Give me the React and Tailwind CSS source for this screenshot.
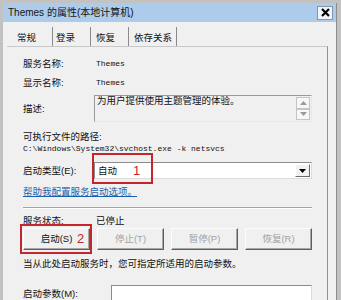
import React from 'react';

const Label = ({ w = 'w-[73px]', children }) => (
  <div className={`${w} shrink-0 text-[9.5px] leading-[12px] text-[#111]`}>{children}</div>
);

const Btn = ({ children, disabled }) => (
  <div
    className={`w-[67px] h-[22px] flex items-center justify-center bg-[#f0f0f0] border border-t-[#fcfcfc] border-l-[#fcfcfc] border-r-[#5f5f5f] border-b-[#5f5f5f] shadow-[inset_-1px_-1px_0_#a8a8a8] text-[9.5px] ${disabled ? 'text-[#a3a3a3]' : 'text-[#111]'}`}
  >
    {children}
  </div>
);

const Arrow = ({ up, color = '#222' }) => (
  <svg width="7" height="4" viewBox="0 0 7 4">
    <path d={up ? 'M0 4 L3.5 0 L7 4 Z' : 'M0 0 L7 0 L3.5 4 Z'} fill={color} />
  </svg>
);

export default function App() {
  return (
    <div className="w-[341px] h-[300px] overflow-hidden bg-[#c2c2c2] pt-[3px] pl-[3px] pr-[4px] font-['Liberation_Sans','Noto_Sans_CJK_SC',sans-serif]">
      <div className="h-[310px] bg-[#f0f0f0] flex flex-col border-r border-[#8c8c8c]">
        {/* title bar */}
        <div className="h-[19px] shrink-0 bg-[#adcbea] flex items-center justify-between pl-[5px] pr-[3px]">
          <span className="text-[10px] text-[#151515] leading-none">Themes 的属性(本地计算机)</span>
          <div className="w-[16px] h-[14px] bg-[#f2f4f7] border border-[#8795a6] flex items-center justify-center">
            <svg width="9" height="9" viewBox="0 0 9 9">
              <path d="M1 1 L8 8 M8 1 L1 8" stroke="#000" strokeWidth="2.2" />
            </svg>
          </div>
        </div>

        {/* tabs */}
        <div className="mt-[5px] h-[19px] shrink-0 flex ml-[4px] text-[9.5px] text-[#111]">
          <div className="w-[46px] pl-[10px] pt-[4px] border-r border-[#8a8a8a]">常规</div>
          <div className="w-[38px] pl-[3px] pt-[4px] border-r border-[#8a8a8a]">登录</div>
          <div className="w-[38px] pl-[5px] pt-[4px] border-r border-[#8a8a8a]">恢复</div>
          <div className="w-[48px] pl-[5px] pt-[4px] border-r border-[#8a8a8a]">依存关系</div>
        </div>

        {/* panel */}
        <div className="flex-1 ml-[4px] mr-[8px] border-t border-t-[#c9c9c9] border-r border-r-[#8f8f8f] pl-[16px] pr-[15px] pt-[7px] flex flex-col">
          <div className="h-[19px] flex items-center">
            <Label>服务名称:</Label>
            <span className="font-['Liberation_Mono',monospace] text-[8px] text-[#111]">Themes</span>
          </div>
          <div className="h-[19px] flex items-center">
            <Label>显示名称:</Label>
            <span className="font-['Liberation_Mono',monospace] text-[8px] text-[#111]">Themes</span>
          </div>

          <div className="mt-[3px] h-[27px] flex items-center">
            <Label w="w-[71px]">描述:</Label>
            <div className="flex-1 h-full flex border border-t-[#9a9a9a] border-l-[#9a9a9a] border-r-[#e8e8e8] border-b-[#e8e8e8] bg-[#f0f0f0]">
              <div className="flex-1 pl-[2px] text-[9.5px] leading-[10px] text-[#111]">为用户提供使用主题管理的体验。</div>
              <div className="w-[15px] flex flex-col py-[1px] pr-[1px]">
                <div className="h-[12px] flex items-center justify-center bg-[#f7f7f7] border border-[#c4c4c4]">
                  <Arrow up color="#9a9a9a" />
                </div>
                <div className="h-[12px] flex items-center justify-center bg-[#f7f7f7] border border-[#c4c4c4]">
                  <Arrow color="#9a9a9a" />
                </div>
              </div>
            </div>
          </div>

          <div className="mt-[9px] h-[12px] text-[9.5px] leading-[12px] text-[#111]">可执行文件的路径:</div>
          <div className="h-[12px] font-['Liberation_Mono',monospace] text-[8px] leading-[12px] text-[#111] whitespace-nowrap">
            {'C:\\Windows\\System32\\svchost.exe -k netsvcs'}
          </div>

          <div className="mt-[7px] h-[17px] flex items-center">
            <Label w="w-[71px]">启动类型(E):</Label>
            <div className="relative flex-1 h-full flex bg-white border border-t-[#8c8c8c] border-l-[#8c8c8c] border-r-[#dcdcdc] border-b-[#dcdcdc]">
              <div className="flex-1 pl-[3px] text-[9.5px] leading-[15px] text-[#111]">自动</div>
              <div className="w-[15px] m-px flex items-center justify-center bg-[#f2f2f2] border border-t-[#fff] border-l-[#fff] border-r-[#6c6c6c] border-b-[#6c6c6c]">
                <Arrow color="#000" />
              </div>
              <div className="absolute left-[-3px] top-[-10px] w-[61px] h-[31px] border-2 border-[#c4262b]" />
              <div className="absolute left-[38px] top-[0px] text-[13px] leading-[15px] text-[#c4262b]">1</div>
            </div>
          </div>

          <div className="mt-[7px] h-[12px] text-[9.5px] leading-[12px] text-[#1a5fae] underline">帮助我配置服务启动选项。</div>

          <div className="mt-[9px] h-[2px] border-t border-[#a4a4a4] border-b border-b-white" />

          <div className="mt-[6px] h-[12px] flex items-center">
            <Label>服务状态:</Label>
            <span className="text-[9.5px] leading-[12px] text-[#111]">已停止</span>
          </div>

          <div className="mt-[1px] flex gap-[7px]">
            <div className="relative">
              <Btn>启动(S)</Btn>
              <div className="absolute left-[-3px] top-[-4px] w-[72px] h-[30px] border-2 border-[#c4262b]" />
              <div className="absolute left-[54px] top-[3px] text-[13px] leading-[15px] text-[#c4262b]">2</div>
            </div>
            <Btn disabled>停止(T)</Btn>
            <Btn disabled>暂停(P)</Btn>
            <Btn disabled>恢复(R)</Btn>
          </div>

          <div className="mt-[8px] h-[12px] text-[9.5px] leading-[12px] text-[#111] whitespace-nowrap">当从此处启动服务时，您可指定所适用的启动参数。</div>

          <div className="mt-[15px] h-[18px] flex items-center">
            <Label w="w-[88px]">启动参数(M):</Label>
            <div className="flex-1 h-full bg-white border border-t-[#8c8c8c] border-l-[#8c8c8c] border-r-[#dcdcdc] border-b-[#dcdcdc]" />
          </div>
        </div>
      </div>
    </div>
  );
}
